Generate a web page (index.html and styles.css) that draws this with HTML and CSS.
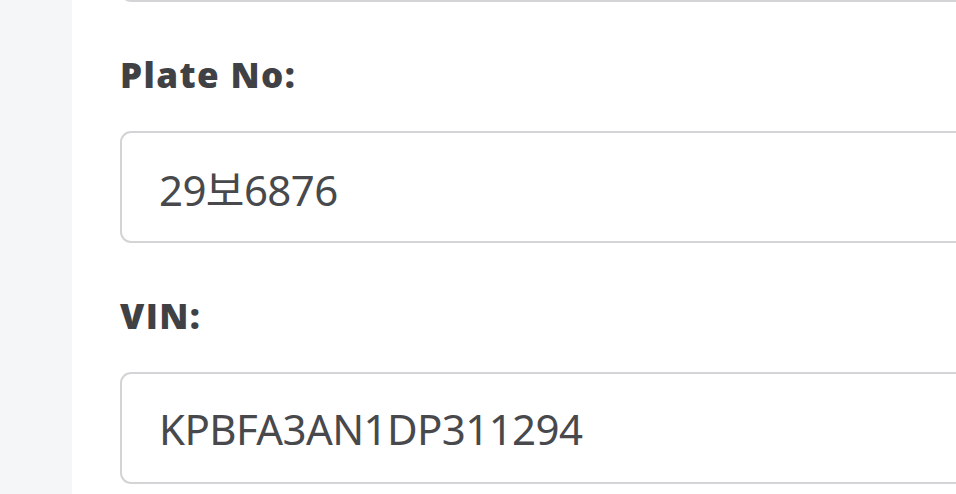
FILE: index.html
```html
<!DOCTYPE html>
<html lang="en">
<head>
<meta charset="utf-8">
<link rel="stylesheet" href="styles.css">
</head>
<body>
<div class="layout">
  <aside class="side"></aside>
  <main class="panel">
    <div class="field field-prev">
      <div class="input"></div>
    </div>
    <div class="field">
      <label class="label">Plate No:</label>
      <div class="input">29보6876</div>
    </div>
    <div class="field">
      <label class="label">VIN:</label>
      <div class="input">KPBFA3AN1DP311294</div>
    </div>
  </main>
</div>
</body>
</html>
```
FILE: styles.css
```css
html, body {
  margin: 0;
  padding: 0;
  background: #ffffff;
  overflow: hidden;
}
body {
  font-family: "Noto Sans", "Noto Sans CJK KR", sans-serif;
  color: #444548;
}
.layout {
  display: flex;
  height: 494px;
}
.side {
  width: 72px;
  flex: none;
  background: #f5f6f8;
}
.panel {
  flex: 1;
  padding-left: 48px;
  overflow: hidden;
}
.field {
  display: flex;
  flex-direction: column;
}
.field-prev {
  margin-top: -110px;
}
.label {
  display: block;
  margin-top: 53px;
  margin-bottom: 36px;
  font-family: "Open Sans", "Noto Sans", sans-serif;
  font-size: 35px;
  line-height: 40px;
  font-weight: 800;
  letter-spacing: 1.4px;
  color: #404145;
}
.input {
  box-sizing: border-box;
  height: 112px;
  width: 900px;
  border: 2.5px solid #d4d4d6;
  border-radius: 11px;
  padding-left: 37px;
  display: flex;
  align-items: center;
  font-size: 42px;
  letter-spacing: -0.6px;
  color: #48494c;
}
```
